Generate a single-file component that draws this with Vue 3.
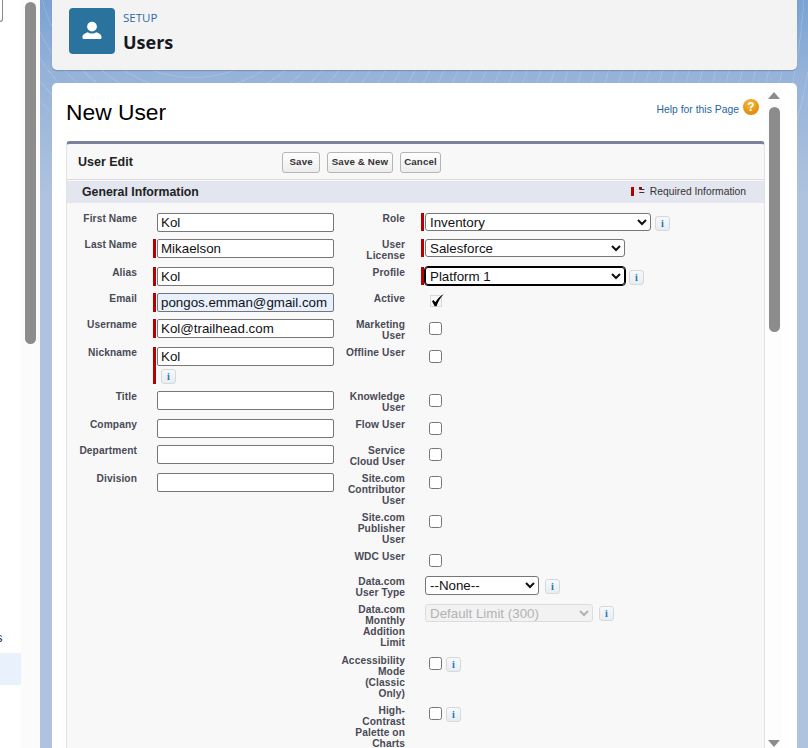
<script setup>
const rows = [
  { left: { label: 'First Name', value: 'Kol' }, right: { label: 'Role', type: 'select', value: 'Inventory', req: true, size: 'wide', info: true } },
  { left: { label: 'Last Name', value: 'Mikaelson', req: true }, right: { label: 'User\nLicense', type: 'select', value: 'Salesforce', req: true, size: 'mid' } },
  { left: { label: 'Alias', value: 'Kol', req: true }, right: { label: 'Profile', type: 'select', value: 'Platform 1', req: true, size: 'mid focused', info: true } },
  { left: { label: 'Email', value: 'pongos.emman@gmail.com', req: true, autofill: true }, right: { label: 'Active', type: 'check' } },
  { left: { label: 'Username', value: 'Kol@trailhead.com', req: true }, right: { label: 'Marketing\nUser', type: 'box' } },
  { left: { label: 'Nickname', value: 'Kol', req: true, info: true }, right: { label: 'Offline User', type: 'box' } },
  { left: { label: 'Title', value: '' }, right: { label: 'Knowledge\nUser', type: 'box' } },
  { left: { label: 'Company', value: '' }, right: { label: 'Flow User', type: 'box' } },
  { left: { label: 'Department', value: '' }, right: { label: 'Service\nCloud User', type: 'box' } },
  { left: { label: 'Division', value: '' }, right: { label: 'Site.com\nContributor\nUser', type: 'box' } },
  { right: { label: 'Site.com\nPublisher\nUser', type: 'box' } },
  { right: { label: 'WDC User', type: 'box' } },
  { right: { label: 'Data.com\nUser Type', type: 'select', value: '--None--', size: 'small', info: true } },
  { right: { label: 'Data.com\nMonthly\nAddition\nLimit', type: 'select', value: 'Default Limit (300)', size: 'limit', disabled: true, info: true } },
  { right: { label: 'Accessibility\nMode\n(Classic\nOnly)', type: 'box', info: true } },
  { right: { label: 'High-\nContrast\nPalette on\nCharts', type: 'box', info: true } }
]
</script>

<template>
  <div class="screen">
    <aside class="nav">
      <div class="nav-search"></div>
      <div class="nav-clip">s</div>
      <div class="nav-active"></div>
    </aside>
    <div class="nav-scroll"><div class="thumb nav-thumb"></div></div>

    <main class="main">
      <header class="page-head">
        <div class="head-icon">
          <svg width="30" height="30" viewBox="0 0 30 30">
            <circle cx="15" cy="10.6" r="4.9" fill="#fff" />
            <path d="M5.4 21.2c0-3 3-4.2 5.4-5 1 .9 2.6 1.4 4.2 1.4s3.200-.5 4.200-1.400c2.400.8 5.400 2 5.400 5 0 1-.6 1.800-1.600 1.800H7c-1 0-1.600-.8-1.600-1.800z" fill="#fff" />
          </svg>
        </div>
        <div class="head-text">
          <div class="head-setup">SETUP</div>
          <div class="head-title">Users</div>
        </div>
      </header>

      <section class="content">
        <div class="title-row">
          <h1>New User</h1>
          <div class="help">
            <a>Help for this Page</a>
            <span class="help-icon">?</span>
          </div>
        </div>

        <div class="block">
          <div class="block-head">
            <h2>User Edit</h2>
            <div class="buttons">
              <button class="btn-save">Save</button>
              <button>Save &amp; New</button>
              <button>Cancel</button>
            </div>
          </div>
          <div class="section-head">
            <h3>General Information</h3>
            <div class="legend"><i class="legend-bar"></i><span class="legend-eq">=</span>Required Information</div>
          </div>

          <div class="form">
            <template v-for="(row, i) in rows" :key="i">
              <div class="label">{{ row.left ? row.left.label : '' }}</div>
              <div class="cell">
                <div v-if="row.left" class="wrap" :class="{ req: row.left.req }">
                  <input class="text" :class="{ autofill: row.left.autofill }" :value="row.left.value" />
                  <span v-if="row.left.info" class="info info-below">i</span>
                </div>
              </div>
              <div class="label">{{ row.right.label }}</div>
              <div class="cell">
                <div class="wrap" :class="{ req: row.right.req }">
                  <select v-if="row.right.type === 'select'" :class="row.right.size" :disabled="row.right.disabled">
                    <option>{{ row.right.value }}</option>
                  </select>
                  <input v-else-if="row.right.type === 'box'" type="checkbox" class="box" :class="{ 'box-low': row.right.info }" />
                  <svg v-else class="check" width="15" height="15" viewBox="0 0 15 15">
                    <rect x="0.5" y="2.500" width="11" height="11" fill="none" stroke="#bbb" stroke-dasharray="1 1" />
                    <path d="M2 8.200l1.500-1.200 1.800 2.200C7.300 6 9.800 3.200 13.800 1 10.900 4 8.400 8 6.500 13.200H4.700z" fill="#000" />
                  </svg>
                  <span v-if="row.right.info" class="info" :class="{ 'info-box': row.right.type === 'box' }">i</span>
                </div>
              </div>
            </template>
          </div>
        </div>

        <div class="page-scroll">
          <span class="arrow arrow-up"></span>
          <div class="thumb page-thumb"></div>
          <span class="arrow arrow-down"></span>
        </div>
      </section>
    </main>
  </div>
</template>

<style>
html, body { margin: 0; overflow: hidden; }
</style>

<style scoped>
.screen {
  display: flex;
  width: 808px;
  height: 748px;
  overflow: hidden;
  font-family: "Liberation Sans", Arial, sans-serif;
  background: #fff;
}

.nav {
  width: 21px;
  flex: none;
  display: flex;
  flex-direction: column;
  background: #fff;
}
.nav-search {
  width: 2px;
  height: 21px;
  border: 1px solid #8a8a8a;
  border-left: 0;
  border-top: 0;
  border-radius: 0 0 3px 0;
}
.nav-clip {
  margin: 608px 0 0 -4px;
  height: 15px;
  font-size: 13px;
  line-height: 15px;
  color: #16325c;
}
.nav-active {
  margin-top: 8px;
  height: 32px;
  background: #e8f1fc;
}
.nav-scroll {
  width: 19px;
  flex: none;
  padding: 2px 4px 0;
  box-sizing: border-box;
  background: #fbfbfb;
}
.thumb {
  background: #8c8c8c;
  border-radius: 6px;
}
.nav-thumb {
  width: 11px;
  height: 342px;
}

.main {
  flex: 1;
  min-width: 0;
  display: flex;
  flex-direction: column;
  gap: 13px;
  padding: 0 11px 0 12px;
  background:
    repeating-radial-gradient(circle at 20% -40px, rgba(255, 255, 255, .14) 0 1px, transparent 1px 13px) 0 0 / 100% 120px no-repeat,
    linear-gradient(180deg, #7aa2d2 0, #95b2d9 72px, #afc3de 200px);
}

.page-head {
  flex: none;
  height: 70px;
  display: flex;
  align-items: flex-start;
  gap: 8px;
  padding: 8px 17px 0;
  box-sizing: border-box;
  background: #f3f3f3;
  border-radius: 0 0 5px 5px;
  box-shadow: 0 1px 1px rgba(60, 80, 110, .35);
}
.head-icon {
  width: 46px;
  height: 46px;
  display: flex;
  align-items: center;
  justify-content: center;
  background: #2a739e;
  border-radius: 4px;
}
.head-setup {
  margin-top: 3px;
  font-family: "Open Sans", sans-serif;
  font-size: 11.500px;
  line-height: 14px;
  color: #2f6aa8;
}
.head-title {
  margin-top: 6px;
  font-family: "Open Sans", sans-serif;
  font-weight: 700;
  font-size: 18px;
  line-height: 22px;
  color: #16191f;
}

.content {
  position: relative;
  flex: 1;
  min-height: 0;
  padding: 0 32px 0 14px;
  background: #fff;
  border-radius: 5px 5px 0 0;
}
.title-row {
  height: 58px;
  display: flex;
  justify-content: space-between;
  align-items: flex-start;
}
h1 {
  margin: 15px 0 0;
  font-weight: 400;
  font-size: 22.800px;
  line-height: 28px;
  color: #000;
}
.help {
  display: flex;
  align-items: center;
  gap: 4px;
  margin: 15px 6px 0 0;
}
.help a {
  font-size: 10.400px;
  color: #1f66a3;
  margin-top: 6px;
}
.help-icon {
  width: 16px;
  height: 16px;
  border-radius: 50%;
  background: radial-gradient(circle at 45% 30%, #f8bb3a, #e08a0c 75%);
  color: #fff;
  font-weight: 700;
  font-size: 12px;
  line-height: 16px;
  text-align: center;
}

.block {
  background: #f8f8f8;
  border: solid #e0e3e5;
  border-width: 0 1px;
  border-top: 3px solid #7b8199;
  border-radius: 4px 4px 0 0;
}
.block-head {
  height: 36px;
  display: flex;
  align-items: center;
  box-sizing: border-box;
  padding-left: 11px;
  border-bottom: 1px solid #dbdbdb;
}
h2 {
  width: 204px;
  margin: 0;
  font-size: 12.500px;
  font-weight: 700;
  color: #222;
}
.buttons {
  display: flex;
  gap: 7px;
  margin-top: 1px;
}
button {
  height: 21px;
  padding: 0 3.500px 2px;
  font: 700 9.700px "Liberation Sans", Arial, sans-serif;
  letter-spacing: .15px;
  color: #333;
  background: linear-gradient(#fff, #ededed);
  border: 1px solid #b5b5b5;
  border-radius: 3px;
}
.btn-save {
  padding: 0 6.500px 2px;
}
.section-head {
  height: 22px;
  display: flex;
  align-items: center;
  justify-content: space-between;
  padding: 0 18px 0 15px;
  margin-top: 1px;
  background: #e3e6ef;
}
h3 {
  margin: 0;
  font-size: 12.300px;
  font-weight: 700;
  color: #222;
}
.legend {
  display: flex;
  align-items: center;
  margin-top: -2px;
  font-size: 10.300px;
  color: #333;
}
.legend-bar {
  width: 3px;
  height: 9px;
  margin: 0 5px 0 -1px;
  background: #b30000;
}
.legend-eq {
  position: relative;
  margin-right: 5px;
}
.legend-eq::before {
  content: "";
  position: absolute;
  top: 1px;
  left: 0;
  width: 3px;
  height: 2px;
  background: #b30000;
}

.form {
  display: grid;
  grid-template-columns: 70px 197px 71px 1fr;
  grid-template-rows: 26px 28px 26px 26px 28px 44px 28px 26px 28px 39px 39px 25px 28px 51px 50px 50px;
  padding-top: 10px;
}
.label {
  font-size: 10.200px;
  font-weight: 700;
  line-height: 11px;
  letter-spacing: .1px;
  color: #4a4a56;
  text-align: right;
  white-space: pre-line;
}
.cell {
  padding-left: 16px;
}
.wrap {
  display: inline-flex;
  flex-wrap: wrap;
  align-items: flex-start;
  gap: 0 4px;
  padding-left: 4px;
}
.wrap.req {
  padding-left: 1px;
  border-left: 3px solid #b30000;
}
.text {
  width: 177px;
  height: 19px;
  padding: 0 3px;
  box-sizing: border-box;
  font: 13.330px "Liberation Sans", Arial, sans-serif;
  color: #111;
  background: #fff;
  border: 1px solid #767676;
  border-radius: 2px;
}
.text.autofill {
  background: #e8f0fe;
}
select {
  height: 19px;
  padding: 0;
  box-sizing: border-box;
  font: 13.330px "Liberation Sans", Arial, sans-serif;
  color: #111;
  background: #fff;
  border: 1px solid #767676;
  border-radius: 3px;
}
select.wide { width: 226px; height: 18px; }
select.mid { width: 200px; height: 18px; }
select.small { width: 114px; }
select.limit { width: 168px; height: 18px; }
select.focused {
  outline: 1px solid #000;
  border-color: #000;
}
select:disabled {
  color: #b3b3b3;
  background: #f2f2f2;
  border-color: #dcdcdc;
  opacity: 1;
}
.box {
  width: 13px;
  height: 13px;
  margin: 3px 0 0 4px;
}
.box-low {
  margin-top: 2px;
}
.check {
  margin: 0 0 0 5px;
}
.info {
  width: 15px;
  height: 15px;
  margin-top: 3px;
  box-sizing: border-box;
  font: 700 10px/13px "Liberation Serif", serif;
  text-align: center;
  color: #1a6fc4;
  background: linear-gradient(#f7f9fa, #e8edf0);
  border: 1px solid #d4dadc;
  border-radius: 3px;
}
.small + .info,
.limit + .info {
  margin-left: 2px;
}
.limit + .info,
.info-box {
  margin-top: 2px;
}
.info-below {
  flex: 0 0 15px;
  margin: 3px 0 0 4px;
}

.page-scroll {
  position: absolute;
  top: 0;
  right: 15px;
  bottom: 0;
  width: 16px;
  display: flex;
  flex-direction: column;
  align-items: center;
  background: #fdfdfd;
}
.arrow {
  width: 0;
  height: 0;
  border-left: 6.500px solid transparent;
  border-right: 6.500px solid transparent;
}
.arrow-up {
  margin-top: 9px;
  border-bottom: 7px solid #8c8c8c;
}
.arrow-down {
  margin-top: auto;
  margin-bottom: 1px;
  border-top: 7px solid #8c8c8c;
}
.page-thumb {
  width: 11px;
  height: 225px;
  margin-top: 8px;
}
</style>
